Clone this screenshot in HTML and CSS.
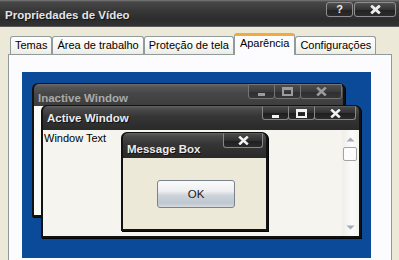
FILE: index.html
```html
<!DOCTYPE html>
<html lang="pt">
<head>
<meta charset="utf-8">
<title>Propriedades de Vídeo</title>
<link rel="stylesheet" href="styles.css">
</head>
<body>
<div class="dialog">
  <header class="titlebar">
    <span class="title">Propriedades de Vídeo</span>
    <div class="tb-buttons">
      <span class="tb-btn help">?</span>
      <span class="tb-btn close">
        <svg width="11" height="9" viewBox="0 0 11 9"><path d="M1.2 0.6 L9.8 8.4 M9.8 0.6 L1.2 8.4" stroke="currentColor" stroke-width="2.8" fill="none"/></svg>
      </span>
    </div>
  </header>

  <nav class="tabs">
    <span class="tab">Temas</span>
    <span class="tab">Área de trabalho</span>
    <span class="tab">Proteção de tela</span>
    <span class="tab selected">Aparência</span>
    <span class="tab">Configurações</span>
  </nav>

  <section class="panel">
    <div class="preview">
      <div class="win inactive">
        <div class="win-title">
          <span class="win-name">Inactive Window</span>
          <div class="caption">
            <span class="cap-btn min"><svg width="9" height="9" viewBox="0 0 9 9"><rect x="1" y="6" width="7" height="3" fill="currentColor"/></svg></span>
            <span class="cap-btn max"><svg width="11" height="9" viewBox="0 0 11 9"><rect x="1" y="1.5" width="9" height="6.5" fill="none" stroke="currentColor" stroke-width="2"/><rect x="0" y="0" width="11" height="3" fill="currentColor"/></svg></span>
            <span class="cap-btn cls"><svg width="11" height="9" viewBox="0 0 11 9"><path d="M1.2 0.6 L9.8 8.4 M9.8 0.6 L1.2 8.4" stroke="currentColor" stroke-width="2.6" fill="none"/></svg></span>
          </div>
        </div>
        <div class="win-body"></div>
      </div>

      <div class="win active">
        <div class="win-title">
          <span class="win-name">Active Window</span>
          <div class="caption">
            <span class="cap-btn min"><svg width="9" height="9" viewBox="0 0 9 9"><rect x="1" y="6" width="7" height="3" fill="currentColor"/></svg></span>
            <span class="cap-btn max"><svg width="11" height="9" viewBox="0 0 11 9"><rect x="1" y="1.5" width="9" height="6.5" fill="none" stroke="currentColor" stroke-width="2"/><rect x="0" y="0" width="11" height="3" fill="currentColor"/></svg></span>
            <span class="cap-btn cls"><svg width="11" height="9" viewBox="0 0 11 9"><path d="M1.2 0.6 L9.8 8.4 M9.8 0.6 L1.2 8.4" stroke="currentColor" stroke-width="2.6" fill="none"/></svg></span>
          </div>
        </div>
        <div class="win-body">
          <span class="win-text">Window Text</span>
          <div class="scrollbar">
            <svg class="arrow" width="9" height="5" viewBox="0 0 9 5"><path d="M0.5 4.5 L4.5 0.5 L8.5 4.5 Z" fill="currentColor"/></svg>
            <span class="thumb"></span>
            <svg class="arrow down" width="9" height="5" viewBox="0 0 9 5"><path d="M0.5 0.5 L4.5 4.5 L8.5 0.5 Z" fill="currentColor"/></svg>
          </div>
        </div>
      </div>

      <div class="win msgbox">
        <div class="win-title">
          <span class="win-name">Message Box</span>
          <div class="caption">
            <span class="cap-btn cls"><svg width="11" height="9" viewBox="0 0 11 9"><path d="M1.2 0.6 L9.8 8.4 M9.8 0.6 L1.2 8.4" stroke="currentColor" stroke-width="2.6" fill="none"/></svg></span>
          </div>
        </div>
        <div class="win-body">
          <span class="ok-btn">OK</span>
        </div>
      </div>
    </div>
  </section>
</div>
</body>
</html>
```

FILE: styles.css
```css
* { box-sizing: border-box; }

html, body {
  margin: 0;
  padding: 0;
}

body {
  width: 399px;
  height: 260px;
  overflow: hidden;
  background: #ece9d8;
  font-family: "Liberation Sans", Arial, sans-serif;
}

.dialog {
  display: flex;
  flex-direction: column;
  height: 260px;
}

/* ---------- main title bar ---------- */
.titlebar {
  flex: none;
  height: 27px;
  display: flex;
  align-items: flex-start;
  background: linear-gradient(#7a7a7a 0, #474747 2px, #383838 40%, #2c2c2c 75%, #333 100%);
  border-bottom: 1px solid #5a5a5a;
}

.title {
  padding: 8px 0 0 5px;
  font-weight: bold;
  font-size: 11.5px;
  line-height: 14px;
  color: #e4e4e4;
  text-shadow: 1px 1px 0 #151515;
}

.tb-buttons {
  display: flex;
  gap: 1px;
  margin: 2px 3px 0 auto;
}

.tb-btn {
  height: 15px;
  display: flex;
  align-items: center;
  justify-content: center;
  border: 1px solid #8f8f8f;
  border-radius: 3px;
  background: linear-gradient(#505050, #333 50%, #222 52%, #2c2c2c);
  color: #ececec;
}

.tb-btn.help {
  width: 27px;
  font-weight: bold;
  font-size: 11px;
  line-height: 13px;
}

.tb-btn.close { width: 42px; }

/* ---------- tabs ---------- */
.tabs {
  flex: none;
  height: 21px;
  margin-top: 6px;
  padding-left: 10px;
  display: flex;
  align-items: flex-end;
  position: relative;
  z-index: 1;
}

.tab {
  height: 18px;
  padding: 1px 4px 0;
  border: 1px solid #919b9c;
  border-bottom: none;
  border-radius: 3px 3px 0 0;
  background: linear-gradient(#ffffff, #f5f4ef 70%, #ecebe3);
  font-size: 11px;
  line-height: 15px;
  color: #000;
  white-space: nowrap;
}

.tab.selected {
  height: 22px;
  margin-bottom: -1px;
  padding: 0 5px;
  border-top: 3px solid #f2aa3c;
  background: #fcfcfe;
}

/* ---------- panel ---------- */
.panel {
  flex: 1;
  margin: 0 7px 0 8px;
  border: 1px solid #919b9c;
  border-bottom: none;
  background: #fcfcfe;
  padding: 17px 0 0 13px;
}

.preview {
  position: relative;
  width: 349px;
  height: 186px;
  background: #0a4a98;
}

/* ---------- preview windows ---------- */
.win {
  position: absolute;
  display: flex;
  flex-direction: column;
  border: 2px solid #121212;
  border-top-width: 1px;
  border-radius: 6px 6px 0 0;
  background: #121212;
  box-shadow: 1px 1px 0 #050505;
}

.win-title {
  flex: none;
  display: flex;
  align-items: flex-start;
  border-radius: 5px 5px 0 0;
  background: linear-gradient(#626262 0, #4a4a4a 3px, #353535 45%, #2a2a2a 100%);
}

.win-name {
  padding-left: 4px;
  font-weight: bold;
  font-size: 11.5px;
  line-height: 14px;
  color: #ebebeb;
  text-shadow: 1px 1px 0 #111;
}

.caption {
  display: flex;
  margin-left: auto;
}

.cap-btn {
  height: 14px;
  display: flex;
  align-items: center;
  justify-content: center;
  border: 1px solid #878787;
  border-top-color: #5a5a5a;
  border-radius: 0 0 3px 3px;
  background: linear-gradient(#4a4a4a, #303030 50%, #1f1f1f 52%, #2a2a2a);
  color: #f2f2f2;
}

.cap-btn.min { width: 27px; }
.cap-btn.max { width: 27px; margin-left: -1px; }
.cap-btn.cls { width: 42px; margin-left: -1px; }

.win-body {
  flex: 1;
  position: relative;
  background: #f5f4ef;
}

/* inactive */
.inactive {
  left: 10px;
  top: 11px;
  width: 313px;
  height: 134px;
}

.inactive .win-title {
  height: 22px;
  background: linear-gradient(#6a6a6a 0, #555 3px, #464646 45%, #3d3d3d 100%);
}

.inactive .win-name {
  padding-top: 7px;
  color: #a9a9a9;
  text-shadow: none;
}

.inactive .caption { margin-right: 1px; }

.inactive .cap-btn {
  height: 15px;
  color: #9c9c9c;
  background: linear-gradient(#4e4e4e, #3c3c3c 50%, #2f2f2f 52%, #363636);
  border-color: #747474;
}

.inactive .win-body { background: #fbfbf8; }

/* active */
.active {
  left: 19px;
  top: 33px;
  width: 320px;
  height: 133px;
}

.active .win-title { height: 24px; }

.active .win-name { padding-top: 5px; }

.active .caption { margin-right: 3px; }

.win-text {
  display: block;
  padding: 2px 0 0 1px;
  font-size: 11px;
  line-height: 13px;
  color: #000;
}

.scrollbar {
  position: absolute;
  right: 0;
  top: 0;
  bottom: 0;
  width: 17px;
  display: flex;
  flex-direction: column;
  align-items: center;
  padding: 7px 0 6px;
  background: linear-gradient(to right, #efeee8, #fbfbf9 60%, #f4f3ee);
  color: #a3abb8;
}

.thumb {
  width: 14px;
  height: 14px;
  margin: 5px 0 0 -2px;
  border: 1px solid #a3a3a3;
  border-radius: 2px;
  background: #fdfdfd;
}

.arrow.down { margin-top: auto; }

/* message box */
.msgbox {
  left: 99px;
  top: 60px;
  width: 147px;
  height: 99px;
}

.msgbox .win-title { height: 25px; }

.msgbox .win-name { padding-top: 9px; }

.msgbox .caption { margin-right: 3px; }

.msgbox .cap-btn.cls { width: 40px; height: 15px; }

.msgbox .win-body {
  background: #ece9d8;
  padding: 22px 0 0 34px;
}

.ok-btn {
  display: flex;
  align-items: center;
  justify-content: center;
  width: 78px;
  height: 28px;
  border: 1px solid #7d838c;
  border-radius: 3px;
  background: linear-gradient(#fbfbfb, #eceef0 40%, #cdd3da 55%, #bfc7d0 85%, #d6dae0);
  font-size: 11.5px;
  color: #1c1c1c;
}
```
